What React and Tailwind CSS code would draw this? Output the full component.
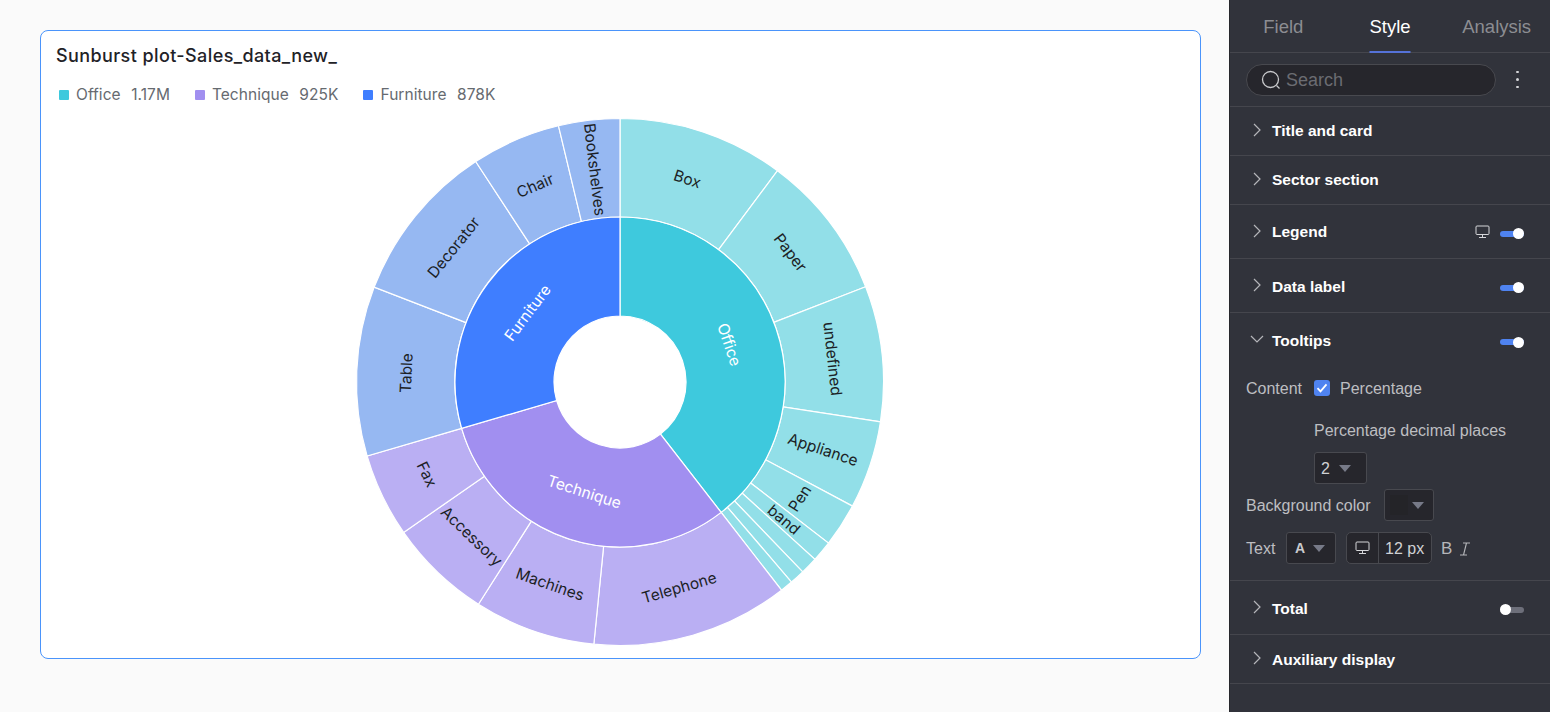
import React from "react";

const R0 = 66, R1 = 165, R2 = 263.5;
const pt = (r, a) => {
  const t = (a * Math.PI) / 180;
  return [r * Math.sin(t), -r * Math.cos(t)];
};
const arc = (r0, r1, a0, a1) => {
  const [x0, y0] = pt(r1, a0);
  const [x1, y1] = pt(r1, a1);
  const [x2, y2] = pt(r0, a1);
  const [x3, y3] = pt(r0, a0);
  const large = a1 - a0 > 180 ? 1 : 0;
  return `M${x0} ${y0}A${r1} ${r1} 0 ${large} 1 ${x1} ${y1}L${x2} ${y2}A${r0} ${r0} 0 ${large} 0 ${x3} ${y3}Z`;
};

const inner = [
  { name: "Office", a0: 0, a1: 142.2, color: "#3ec9dd" },
  { name: "Technique", a0: 142.2, a1: 253.7, color: "#a18ff0" },
  { name: "Furniture", a0: 253.7, a1: 360, color: "#3f7eff" },
];
const C1 = "#92dfe8", C2 = "#baaff3", C3 = "#96b8f2";
const outer = [
  { name: "Box", a0: 0, a1: 36.7, color: C1 },
  { name: "Paper", a0: 36.7, a1: 68.8, color: C1 },
  { name: "undefined", a0: 68.8, a1: 98.7, color: C1 },
  { name: "Appliance", a0: 98.7, a1: 118.1, color: C1, radial: true },
  { name: "Pen", a0: 118.1, a1: 127.7, color: C1 },
  { name: "band", a0: 127.7, a1: 132.3, color: C1, radial: true },
  { name: "", a0: 132.3, a1: 136.1, color: C1 },
  { name: "", a0: 136.1, a1: 139.4, color: C1 },
  { name: "", a0: 139.4, a1: 142.2, color: C1 },
  { name: "Telephone", a0: 142.2, a1: 185.7, color: C2 },
  { name: "Machines", a0: 185.7, a1: 212.5, color: C2 },
  { name: "Accessory", a0: 212.5, a1: 235.2, color: C2 },
  { name: "Fax", a0: 235.2, a1: 253.7, color: C2 },
  { name: "Table", a0: 253.7, a1: 291.1, color: C3 },
  { name: "Decorator", a0: 291.1, a1: 326.8, color: C3 },
  { name: "Chair", a0: 326.8, a1: 346.5, color: C3 },
  { name: "Bookshelves", a0: 346.5, a1: 360, color: C3, radial: true },
];

function Label({ s, r, white }) {
  const mid = (s.a0 + s.a1) / 2;
  const [x, y] = pt(r, mid);
  let rot;
  if (s.radial) rot = mid > 180 ? mid - 270 : mid - 90;
  else rot = mid > 90 && mid < 270 ? mid - 180 : mid > 270 ? mid - 360 : mid;
  return (
    <text
      transform={`translate(${x} ${y}) rotate(${rot})`}
      textAnchor="middle"
      dominantBaseline="central"
      className="text-[15.5px]"
      fill={white ? "#ffffff" : "#1c1f26"}
    >
      {s.name}
    </text>
  );
}

function Sunburst() {
  return (
    <svg width="540" height="540" viewBox="-269 -270 540 540" className="block" style={{ fontFamily: "Inter, sans-serif" }}>
      {outer.map((s, i) => (
        <path key={i} d={arc(R1, R2, s.a0, s.a1)} fill={s.color} stroke="#fff" strokeWidth="1.2" />
      ))}
      {inner.map((s) => (
        <path key={s.name} d={arc(R0, R1, s.a0, s.a1)} fill={s.color} stroke="#fff" strokeWidth="1.2" />
      ))}
      {outer.map((s, i) => s.name && <Label key={i} s={s} r={214} />)}
      {inner.map((s) => <Label key={s.name} s={s} r={115.5} white />)}
    </svg>
  );
}

function LegendItem({ color, name, value }) {
  return (
    <div className="flex items-center">
      <span className="w-2.5 h-2.5 rounded-[1px] mr-[7px]" style={{ background: color }} />
      <span>{name}</span>
      <span className="ml-[10.5px]">{value}</span>
    </div>
  );
}

const Chevron = () => (
  <svg viewBox="0 0 10 14" fill="none" stroke="#b5b6ba" strokeWidth="1.2" className="w-[10px] h-[14px] mr-[10px] -mt-[2px]">
    <path d="M2 1l6 6-6 6" />
  </svg>
);
const ChevronDown = () => (
  <svg viewBox="0 0 14 10" fill="none" stroke="#b5b6ba" strokeWidth="1.2" className="w-[14px] h-[10px] -ml-[2px] mr-[8px] -mt-[2px]">
    <path d="M1 2l6 6 6-6" />
  </svg>
);

const Toggle = ({ on = true }) => (
  <div className={`relative w-6 h-[6px] rounded-full mt-[4px] ${on ? "bg-[#4f83f0]" : "bg-[#6d6f7a]"}`}>
    <span className={`absolute top-[-2.5px] w-[11px] h-[11px] rounded-full bg-white ${on ? "right-0" : "left-0"}`} />
  </div>
);

const Monitor = ({ className = "" }) => (
  <svg width="15" height="14" viewBox="0 0 15 14" fill="none" stroke="#d5d6d9" strokeWidth="1" className={className}>
    <rect x="1" y="1" width="13" height="8.5" rx="1" />
    <path d="M7.5 9.5v3M4 12.5h7" />
  </svg>
);

const Caret = () => (
  <span className="w-0 h-0 border-x-[6px] border-x-transparent border-t-[7px] border-t-[#777a88]" />
);

const Row = ({ title, h, right, low }) => (
  <div className={`flex items-center px-[22px] pr-[26px] border-b border-[#45464d] ${h}`}>
    <Chevron />
    <span className={`font-bold text-[15.5px] text-white ${low ? "translate-y-px" : ""}`}>{title}</span>
    <div className="ml-auto flex items-center">{right}</div>
  </div>
);

export default function App() {
  return (
    <div className="flex h-screen w-full overflow-hidden bg-[#fafafa]" style={{ fontFamily: '"Liberation Sans", Arial, sans-serif' }}>
      <main className="flex-1 pl-10 pr-[28px] pt-[30px]" style={{ fontFamily: "Inter, sans-serif" }}>
        <div className="h-[629px] rounded-lg border border-[#4a94fb] bg-white flex flex-col">
          <h1 className="text-[18px] tracking-[0.4px] font-medium text-[#1f2227] pl-[15px] pt-[13px] leading-6">Sunburst plot-Sales_data_new_</h1>
          <div className="flex gap-[25px] pl-[18px] mt-[17px] text-[15.5px] tracking-[0.05px] leading-5 text-[#666a70]">
            <LegendItem color="#3ec9dd" name="Office" value="1.17M" />
            <LegendItem color="#a18ff0" name="Technique" value="925K" />
            <LegendItem color="#3f7eff" name="Furniture" value="878K" />
          </div>
          <div className="flex justify-center mt-[7px]">
            <Sunburst />
          </div>
        </div>
      </main>
      <aside className="w-[321px] h-full bg-[#31333b] border-l border-[#26272c] text-[#bdbec1] text-[16px]">
        <div className="flex h-[53px] border-b border-[#45464d] text-[18.5px] text-[#8c8d92]">
          <div className="flex-1 flex justify-center items-center pt-[1px]">Field</div>
          <div className="relative flex-1 flex justify-center items-center pt-[1px] text-white">
            Style
            <span className="absolute bottom-[-1px] left-1/2 -translate-x-1/2 w-[41px] h-[2px] bg-[#5572d8]" />
          </div>
          <div className="flex-1 flex justify-center items-center pt-[1px]">Analysis</div>
        </div>
        <div className="flex items-center h-[54px] pl-4 border-b border-[#45464d]">
          <div className="w-[250px] h-8 rounded-full bg-[#26262c] border border-[#48494f] flex items-center pl-[14px] text-[18px] text-[#6b6c72]">
            <svg width="20" height="20" viewBox="0 0 20 20" fill="none" stroke="#c9cacd" strokeWidth="1.3" className="mr-[5px]">
              <circle cx="9.5" cy="9.5" r="8" />
              <path d="M15.5 15.5l3 3" />
            </svg>
            <span className="translate-y-px">Search</span>
          </div>
          <div className="ml-[20px] flex flex-col gap-[5px]">
            <span className="w-[2.5px] h-[2.5px] rounded-full bg-[#d5d6d9]" />
            <span className="w-[2.5px] h-[2.5px] rounded-full bg-[#d5d6d9]" />
            <span className="w-[2.5px] h-[2.5px] rounded-full bg-[#d5d6d9]" />
          </div>
        </div>
        <Row title="Title and card" h="h-[49px]" />
        <Row title="Sector section" h="h-[49px]" />
        <Row title="Legend" h="h-[54px]" right={<><Monitor className="mr-[10px]" /><Toggle /></>} />
        <Row title="Data label" h="h-[54px]" low right={<Toggle />} />
        <div className="border-b border-[#45464d] h-[268px] px-4">
          <div className="flex items-center h-[54px] pl-[6px] pr-[10px]">
            <ChevronDown />
            <span className="font-bold text-[15.5px] text-white translate-y-px">Tooltips</span>
            <div className="ml-auto"><Toggle /></div>
          </div>
          <div className="flex items-center h-6 mt-[9px]">
            <span className="w-[68px] translate-y-px">Content</span>
            <span className="w-4 h-4 rounded-[3px] bg-[#4f83f0] flex items-center justify-center mr-[10px]">
              <svg width="12" height="12" viewBox="0 0 12 12" fill="none" stroke="#fff" strokeWidth="1.8"><path d="M1.5 6.2l3 3.2 6-7" /></svg>
            </span>
            <span className="translate-y-px">Percentage</span>
          </div>
          <div className="h-6 mt-[18px] pl-[68px] leading-6 translate-y-px">Percentage decimal places</div>
          <div className="ml-[68px] mt-[10px] w-[53px] h-8 rounded-[3px] bg-[#26262c] border border-[#48494f] flex items-center pl-[6px] gap-[9px] text-[#d0d1d4]">
            <span className="translate-y-px">2</span> <Caret />
          </div>
          <div className="flex items-center mt-[5px]">
            <span className="w-[138px] translate-y-px">Background color</span>
            <div className="w-[50px] h-8 rounded-[3px] bg-[#26262c] border border-[#48494f] flex items-center justify-between pl-[5px] pr-[9px]">
              <span className="w-[18px] h-5 bg-[#242428]" />
              <Caret />
            </div>
          </div>
          <div className="flex items-center mt-[11px]">
            <span className="w-10 translate-y-px">Text</span>
            <div className="w-[50px] h-8 rounded-[3px] bg-[#26262c] border border-[#48494f] flex items-center pl-[8px] gap-[8px] text-[14px] font-bold text-[#c9cacd]">
              A <Caret />
            </div>
            <div className="ml-[10px] w-[86px] h-8 rounded-[5px] bg-[#26262c] border border-[#48494f] flex items-center">
              <div className="w-[32px] h-full border-r border-[#48494f] flex items-center justify-center">
                <Monitor />
              </div>
              <span className="pl-[6px] text-[#d0d1d4] translate-y-px">12 px</span>
            </div>
            <span className="ml-[9px] text-[17px] text-[#b5b6ba] translate-y-px">B</span>
            <svg width="10" height="14" viewBox="0 0 10 14" fill="none" stroke="#b5b6ba" strokeWidth="1.1" className="ml-[8px] translate-y-px">
              <path d="M3 1h7M0 13h7M6.5 1L3.5 13" />
            </svg>
          </div>
        </div>
        <Row title="Total" h="h-[54px]" low right={<Toggle on={false} />} />
        <Row title="Auxiliary display" h="h-[49px]" low />
      </aside>
    </div>
  );
}
